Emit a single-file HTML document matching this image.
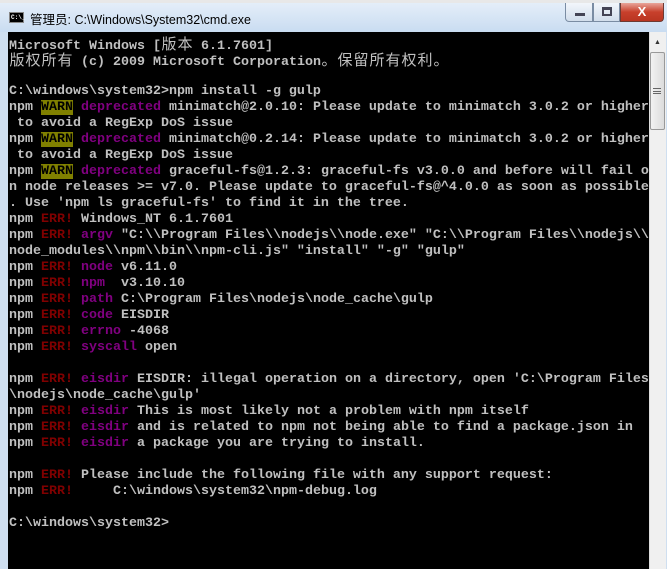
<!DOCTYPE html>
<html><head><meta charset="utf-8"><style>
*{margin:0;padding:0;box-sizing:border-box}
body{width:667px;height:569px;overflow:hidden;background:#cfdff0;position:relative;font-family:"Liberation Sans","Noto Sans CJK SC",sans-serif}
.top{position:absolute;left:0;top:0;width:667px;height:4px;background:#e8e8e8}
.tb{position:absolute;left:0;top:3px;width:667px;height:29px;background:linear-gradient(#e4eef9,#c9dcf1)}
.ico{position:absolute;left:9px;top:12px;width:15px;height:11px;background:#000;border:1px solid #888;color:#fff;font:bold 6px "Liberation Mono",monospace;line-height:9px;padding-left:1px}
.ttl{position:absolute;left:30px;top:9px;font-size:12.5px;color:#000}
.btn{position:absolute;top:3px;height:19px;border:1px solid #7a8ca3;border-top:none;background:linear-gradient(#f2f6fb,#d2deec)}
.cls{background:linear-gradient(#e8a59a,#c8402c 50%,#b93521);border-color:#6d3a33}
.term{position:absolute;left:8px;top:32px;width:641px;height:537px;background:#000}
.sb{position:absolute;left:649px;top:32px;width:17px;height:537px;background:#f0f0f0;border-left:1px solid #ddd}
.thumb{position:absolute;left:650px;top:52px;width:15px;height:78px;border:1px solid #999;border-radius:2px;background:linear-gradient(90deg,#f2f2f2,#dcdcdc)}
pre{position:absolute;left:9px;top:36px;font:bold 13.33px/16px "Liberation Mono","Noto Sans CJK SC",monospace;color:#c0c0c0;white-space:pre}
pre div{height:16px}
.w{background:#808000;color:#000}.m{color:#800080}.r{color:#800000}
.c{display:inline-block;width:16px;font-weight:normal;font-size:15px;font-family:"Noto Sans CJK SC",sans-serif;text-align:center}
</style></head><body>
<div class="top"></div>
<div class="tb"></div>
<div class="ico">C:\_</div>
<div class="ttl">管理员: C:\Windows\System32\cmd.exe</div>
<div class="btn" style="left:565px;width:28px;border-radius:0 0 0 4px"><div style="position:absolute;left:9px;top:10px;width:10px;height:3px;background:#445;"></div></div>
<div class="btn" style="left:593px;width:27px"><div style="position:absolute;left:8px;top:4px;width:10px;height:9px;border:2px solid #445;border-top-width:3px"></div></div>
<div class="btn cls" style="left:620px;width:44px;border-radius:0 0 4px 0;color:#fff;font:bold 13px 'Liberation Sans',sans-serif;text-align:center;line-height:18px">X</div>
<div class="term"></div>
<div class="sb"></div>
<div class="thumb"></div>
<div style="position:absolute;left:654px;top:39px;font-size:7px;color:#333">▲</div>
<div style="position:absolute;left:653px;top:88px;width:8px;height:6px;border-top:1px solid #666;border-bottom:1px solid #666"><div style="margin-top:1.5px;height:1px;background:#666"></div></div>
<pre><div>Microsoft Windows [<span class="c">版</span><span class="c">本</span> 6.1.7601]</div><div><span class="c">版</span><span class="c">权</span><span class="c">所</span><span class="c">有</span> (c) 2009 Microsoft Corporation<span class="c">。</span><span class="c">保</span><span class="c">留</span><span class="c">所</span><span class="c">有</span><span class="c">权</span><span class="c">利</span><span class="c">。</span></div><div> </div><div>C:\windows\system32&gt;npm install -g gulp</div><div>npm <span class="w">WARN</span> <span class="m">deprecated</span> minimatch@2.0.10: Please update to minimatch 3.0.2 or higher</div><div> to avoid a RegExp DoS issue</div><div>npm <span class="w">WARN</span> <span class="m">deprecated</span> minimatch@0.2.14: Please update to minimatch 3.0.2 or higher</div><div> to avoid a RegExp DoS issue</div><div>npm <span class="w">WARN</span> <span class="m">deprecated</span> graceful-fs@1.2.3: graceful-fs v3.0.0 and before will fail o</div><div>n node releases &gt;= v7.0. Please update to graceful-fs@^4.0.0 as soon as possible</div><div>. Use 'npm ls graceful-fs' to find it in the tree.</div><div>npm <span class="r">ERR!</span> Windows_NT 6.1.7601</div><div>npm <span class="r">ERR!</span> <span class="m">argv</span> "C:\\Program Files\\nodejs\\node.exe" "C:\\Program Files\\nodejs\\</div><div>node_modules\\npm\\bin\\npm-cli.js" "install" "-g" "gulp"</div><div>npm <span class="r">ERR!</span> <span class="m">node</span> v6.11.0</div><div>npm <span class="r">ERR!</span> <span class="m">npm </span> v3.10.10</div><div>npm <span class="r">ERR!</span> <span class="m">path</span> C:\Program Files\nodejs\node_cache\gulp</div><div>npm <span class="r">ERR!</span> <span class="m">code</span> EISDIR</div><div>npm <span class="r">ERR!</span> <span class="m">errno</span> -4068</div><div>npm <span class="r">ERR!</span> <span class="m">syscall</span> open</div><div> </div><div>npm <span class="r">ERR!</span> <span class="m">eisdir</span> EISDIR: illegal operation on a directory, open 'C:\Program Files</div><div>\nodejs\node_cache\gulp'</div><div>npm <span class="r">ERR!</span> <span class="m">eisdir</span> This is most likely not a problem with npm itself</div><div>npm <span class="r">ERR!</span> <span class="m">eisdir</span> and is related to npm not being able to find a package.json in</div><div>npm <span class="r">ERR!</span> <span class="m">eisdir</span> a package you are trying to install.</div><div> </div><div>npm <span class="r">ERR!</span> Please include the following file with any support request:</div><div>npm <span class="r">ERR!</span>     C:\windows\system32\npm-debug.log</div><div> </div><div>C:\windows\system32&gt;</div></pre>
</body></html>
